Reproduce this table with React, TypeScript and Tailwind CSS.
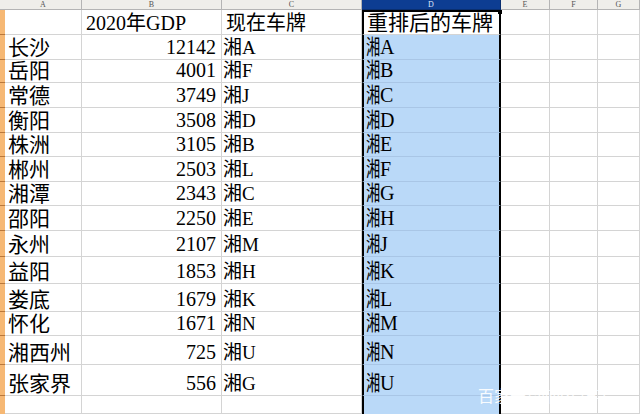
import React from "react";

const serif = "font-['Liberation_Serif','Noto_Sans_CJK_SC',serif]";

const rows = [
  { h: "h-[25px]", a: "长沙", b: "12142", c: "湘A", d: "A" },
  { h: "h-[23px]", a: "岳阳", b: "4001", c: "湘F", d: "B" },
  { h: "h-[25px]", a: "常德", b: "3749", c: "湘J", d: "C" },
  { h: "h-[25px]", a: "衡阳", b: "3508", c: "湘D", d: "D" },
  { h: "h-[24px]", a: "株洲", b: "3105", c: "湘B", d: "E" },
  { h: "h-[25px]", a: "郴州", b: "2503", c: "湘L", d: "F" },
  { h: "h-[24px]", a: "湘潭", b: "2343", c: "湘C", d: "G" },
  { h: "h-[25px]", a: "邵阳", b: "2250", c: "湘E", d: "H" },
  { h: "h-[26px]", a: "永州", b: "2107", c: "湘M", d: "J" },
  { h: "h-[27px]", a: "益阳", b: "1853", c: "湘H", d: "K" },
  { h: "h-[28px]", a: "娄底", b: "1679", c: "湘K", d: "L" },
  { h: "h-[24px]", a: "怀化", b: "1671", c: "湘N", d: "M" },
  { h: "h-[29px]", a: "湘西州", b: "725", c: "湘U", d: "N" },
  { h: "h-[31px]", a: "张家界", b: "556", c: "湘G", d: "U" },
];

const cell = "box-border border-r border-b border-[#d4d4d4] flex items-end whitespace-nowrap";

function ColHead({ w, label, active }: { w: string; label: string; active?: boolean }) {
  return (
    <div
      className={`${w} h-full box-border border-r border-b flex items-center justify-center text-[8px] leading-none ${
        active
          ? "bg-[#0d3d92] text-[#dfe8f8] border-[#0a2f70]"
          : "bg-[#efeeea] text-[#555] border-[#b4b4b4]"
      }`}
    >
      {label}
    </div>
  );
}

function Tail() {
  return (
    <>
      <div className={`${cell} w-[49px]`} />
      <div className={`${cell} w-[48px]`} />
      <div className={`${cell} w-[42px]`} />
    </>
  );
}

export default function App() {
  return (
    <div className={`relative w-[640px] h-[414px] overflow-hidden bg-white text-black ${serif}`}>
      {/* column letters */}
      <div className="flex h-[10px]">
        <div className="w-[5px] h-full bg-[#efeeea] border-b border-[#b4b4b4]" />
        <ColHead w="w-[77px]" label="A" />
        <ColHead w="w-[140px]" label="B" />
        <ColHead w="w-[140px]" label="C" />
        <ColHead w="w-[139px]" label="D" active />
        <ColHead w="w-[49px]" label="E" />
        <ColHead w="w-[48px]" label="F" />
        <ColHead w="w-[42px]" label="G" />
      </div>

      {/* title row */}
      <div className="flex h-[25px]">
        <div className="w-[5px] h-full bg-[#f6b874] border-b border-[#b9773a]" />
        <div className={`${cell} w-[77px]`} />
        <div className={`${cell} w-[140px] pl-[4px] text-[20px] leading-[22px]`}>2020年GDP</div>
        <div className={`${cell} w-[140px] pl-[4px] text-[20px] leading-[22px]`}>现在车牌</div>
        <div className="box-border w-[139px] h-full border-x-2 border-t-2 border-black border-b border-b-[#d4d4d4] bg-white flex items-end pl-[3px] text-[21px] leading-[22px] whitespace-nowrap">
          重排后的车牌
        </div>
        <Tail />
      </div>

      {rows.map((r) => (
        <div key={r.a} className={`flex ${r.h}`}>
          <div className="w-[5px] h-full bg-[#f6b874] border-b border-[#b9773a]" />
          <div className={`${cell} w-[77px] pl-[3px] text-[21px] leading-[22px]`}>{r.a}</div>
          <div className={`${cell} w-[140px] justify-end pr-[5px] pb-[1px] text-[20px] leading-[22px]`}>{r.b}</div>
          <div className={`${cell} w-[140px] pl-[1px] text-[19px] leading-[22px]`}>{r.c}</div>
          <div className="box-border w-[139px] h-full border-x-2 border-black border-b border-b-[#a9c6e6] bg-[#bad9f8] flex items-end pl-[2px] pb-[1px] text-[21px] leading-[22px] whitespace-nowrap">
            <span className="inline-block w-[14px] origin-left scale-x-[0.68]">湘</span>
            <span className="text-[20px]">{r.d}</span>
          </div>
          <Tail />
        </div>
      ))}

      {/* empty last row */}
      <div className="flex h-[18px]">
        <div className="w-[5px] h-full bg-[#f6b874]" />
        <div className={`${cell} w-[77px]`} />
        <div className={`${cell} w-[140px]`} />
        <div className={`${cell} w-[140px]`} />
        <div className="box-border w-[139px] h-full border-x-2 border-black bg-[#bad9f8]" />
        <Tail />
      </div>

      {/* fill handle */}
      <div className="absolute left-[498px] top-[10px] w-[4px] h-[4px] bg-black" />

      {/* watermark */}
      <div className="absolute left-[478px] top-[387px] text-[16px] leading-none text-white/90 font-['Noto_Sans_CJK_SC',sans-serif] whitespace-nowrap">
        百家号/湖南车牌事
      </div>
    </div>
  );
}
